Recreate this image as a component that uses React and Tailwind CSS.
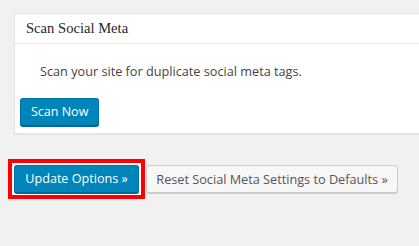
import React from "react";

const sans = "font-['Open_Sans','Noto_Sans',sans-serif]";

const App = () => {
  return (
    <div className={`min-h-screen overflow-hidden bg-[#f1f1f1] pl-[14px] pt-[13px] ${sans}`}>
      {/* Scan box */}
      <div className="w-[420px] border border-[#e5e5e5] bg-white shadow-[0_1px_1px_rgba(0,0,0,0.04)]">
        <div className="flex h-[30px] items-center border-b border-[#eeeeee] px-[11px]">
          <h2 className="font-['Liberation_Serif',serif] text-[14.6px] text-[#23282d]">
            Scan Social Meta
          </h2>
        </div>
        <div className="pl-[5px] pt-[17px] pb-[7px]">
          <p className="ml-[20px] text-[12.7px] leading-[20px] text-[#444444]">
            Scan your site for duplicate social meta tags.
          </p>
          <button className="mt-[17px] h-[28px] rounded-[3px] border border-[#0073aa] border-b-[#006799] bg-[#0085ba] px-[10px] text-[12.5px] leading-[26px] text-white shadow-[0_1px_0_#006799]">
            Scan Now
          </button>
        </div>
      </div>

      {/* Form actions */}
      <div className="-ml-[6px] mt-[25px] flex items-start">
        <div className="border-4 border-[#ff0000] bg-white p-[2px]">
          <button className="block h-[28px] w-[125px] rounded-[3px] border border-[#0073aa] border-b-[#006799] bg-[#0085ba] text-[12.6px] leading-[26px] text-white shadow-[0_1px_0_#006799]">
            Update Options »
          </button>
        </div>
        <button className="ml-[1px] mt-[6px] h-[28px] w-[252px] rounded-[3px] border border-[#cccccc] bg-[#f7f7f7] text-[12.7px] leading-[26px] text-[#555555] shadow-[0_1px_0_#cccccc]">
          Reset Social Meta Settings to Defaults »
        </button>
      </div>
    </div>
  );
};

export default App;
